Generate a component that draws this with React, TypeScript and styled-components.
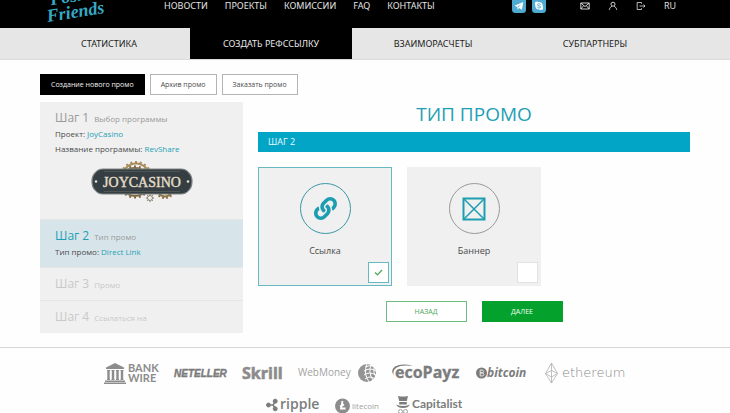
import React, { useState } from "react";
import styled, { createGlobalStyle, css } from "styled-components";
import { FaLink } from "react-icons/fa";

const color = {
  ink: "#222222",
  text: "#4a4a4a",
  muted: "#9a9a9a",
  faint: "#c9c9c9",
  panel: "#f0f0f0",
  teal: "#1f9fb5",
  bar: "#03a5c7",
  green: "#04a22c",
  logo: "#8c8c8c",
  logoLight: "#b0b0b0",
};

const GlobalStyle = createGlobalStyle`
  *, *::before, *::after { box-sizing: border-box; }
  body {
    margin: 0;
    background: #fefefe;
    color: ${color.text};
    font-family: "Open Sans", "Noto Sans", sans-serif;
  }
  button, input { font: inherit; margin: 0; }
  a { color: inherit; text-decoration: none; }
  svg { display: block; flex: none; overflow: visible; }
`;

const Page = styled.div`
  height: 100vh;
  overflow: hidden;
`;

/* ---------- header ---------- */

const Header = styled.header`
  display: flex;
  align-items: flex-start;
  height: 28px;
  padding: 0 54px 0 40px;
  background: #000;
  color: #e4e4e4;
`;

const Brand = styled.a`
  width: 124px;
`;

const MainNav = styled.nav`
  display: flex;
  gap: 17px;
  font-family: "Noto Sans", sans-serif;
  font-size: 9px;
  line-height: 12px;
`;

const Social = styled.div`
  display: flex;
  gap: 6px;
  margin-left: auto;
`;

const Tools = styled.div`
  display: flex;
  align-items: center;
  gap: 18px;
  margin-left: 34px;
  font-size: 9px;
  line-height: 12px;
`;

const IconButton = styled.button`
  padding: 0;
  border: 0;
  background: none;
  color: inherit;
  cursor: pointer;
`;

const Sections = styled.nav`
  display: grid;
  grid-template-columns: repeat(4, 1fr);
  padding: 0 54px 0 28px;
  background: #e6e6e6;
  border-bottom: 1px solid #dcdcdc;
`;

const SectionLink = styled.a<{ $active?: boolean }>`
  padding-top: 1px;
  font-family: "Noto Sans", sans-serif;
  font-size: 9px;
  line-height: 30px;
  text-align: center;
  color: ${(p) => (p.$active ? "#e8e8e8" : color.ink)};
  background: ${(p) => (p.$active ? "#000" : "transparent")};
`;

/* ---------- content ---------- */

const Content = styled.main`
  padding: 14px 40px;
`;

const PromoTabs = styled.div`
  display: flex;
  gap: 5px;
  margin-bottom: 7px;
`;

const PromoTab = styled.button<{ $active?: boolean }>`
  height: 21px;
  padding: 0 10px;
  font-size: 7px;
  border: 1px solid ${(p) => (p.$active ? "#000" : "#b4b4b4")};
  background: ${(p) => (p.$active ? "#000" : "#fff")};
  color: ${(p) => (p.$active ? "#f0f0f0" : color.text)};
  cursor: pointer;
`;

const Columns = styled.div`
  display: grid;
  grid-template-columns: 203fr 432fr;
  gap: 15px;
  align-items: start;
`;

const Steps = styled.aside`
  background: ${color.panel};
`;

const Step = styled.section<{ $state: "done" | "current" | "next" }>`
  padding: 8px 15px;
  color: ${(p) => (p.$state === "next" ? color.faint : color.text)};
  ${(p) => p.$state === "current" && css`background: #d7e5ea;`}
  ${(p) =>
    p.$state === "next" &&
    css`
      & + & {
        border-top: 1px solid #e6e6e6;
      }
    `}
`;

const StepTitle = styled.h2<{ $tone: string }>`
  display: flex;
  align-items: baseline;
  gap: 5px;
  margin: 0;
  font-size: 12px;
  font-weight: 400;
  line-height: 16px;
  color: ${(p) => p.$tone};
`;

const StepHint = styled.span<{ $tone: string }>`
  font-size: 8px;
  line-height: 8px;
  color: ${(p) => p.$tone};
`;

const StepLine = styled.p`
  margin: 0;
  font-size: 8px;
  line-height: 15px;
`;

const StepLink = styled.a`
  && {
    color: ${color.teal};
  }
`;

const CasinoLogo = styled.div`
  display: flex;
  justify-content: center;
  padding: 4px 0 8px;
`;

const Title = styled.h1`
  margin: 0 0 6px;
  font-size: 19px;
  font-weight: 400;
  line-height: 24px;
  text-align: center;
  color: ${color.teal};
`;

const StepBar = styled.div`
  padding: 0 10px;
  font-size: 9px;
  line-height: 20px;
  background: ${color.bar};
  color: #e9fbff;
`;

const Cards = styled.div`
  display: grid;
  grid-template-columns: repeat(auto-fill, 134px);
  gap: 15px;
  margin: 15px 0;
`;

const Card = styled.label<{ $selected: boolean }>`
  display: flex;
  flex-direction: column;
  align-items: center;
  padding: 15px 2px 2px;
  font-size: 9px;
  line-height: 18px;
  border: 1px solid ${(p) => (p.$selected ? "#66b8c2" : color.panel)};
  background: ${color.panel};
  cursor: pointer;
`;

const Ring = styled.span<{ $selected: boolean }>`
  display: grid;
  place-items: center;
  width: 51px;
  height: 51px;
  margin-bottom: 8px;
  border: 1px solid ${(p) => (p.$selected ? "#3a98a4" : "#999")};
  border-radius: 50%;
  color: #1c9db0;
`;

const Tick = styled.span`
  display: grid;
  place-items: center;
  align-self: flex-end;
  margin-top: 2px;

  & > * {
    grid-area: 1 / 1;
  }

  svg {
    pointer-events: none;
  }
`;

const TickInput = styled.input`
  appearance: none;
  width: 21px;
  height: 21px;
  border: 1px solid #e2e2e2;
  background: #fff;

  &:checked {
    border-color: #66b8c2;
  }
`;

const Actions = styled.div`
  display: flex;
  justify-content: center;
  gap: 15px;
`;

const ActionButton = styled.button<{ $primary?: boolean }>`
  width: 81px;
  height: 21px;
  padding: 0;
  font-size: 7px;
  border: 1px solid ${(p) => (p.$primary ? color.green : "#6fbd80")};
  background: ${(p) => (p.$primary ? color.green : "#fff")};
  color: ${(p) => (p.$primary ? "#f2fff4" : "#4fa862")};
  cursor: pointer;
`;

/* ---------- footer ---------- */

const Footer = styled.footer`
  display: flex;
  flex-direction: column;
  gap: 10px;
  padding-top: 14px;
  border-top: 1px solid #d6d6d6;
`;

const PaymentRow = styled.div`
  display: flex;
  justify-content: center;
  align-items: center;
  gap: 15px;
`;

/* ---------- drawings ---------- */

const BrandLogo = () => (
  <svg width="68" height="28" viewBox="0 0 68 28" role="img" aria-label="PosH Friends">
    <g
      transform="rotate(-9 8 24)"
      fill="#36a9c4"
      fontFamily='"Liberation Serif", serif'
      fontStyle="italic"
      fontWeight="700"
    >
      <text x="14" y="6" fontSize="18">Posh</text>
      <text x="8" y="22" fontSize="18">Friends</text>
    </g>
  </svg>
);

const TelegramIcon = () => (
  <svg width="14" height="13" viewBox="0 0 14 13" aria-hidden="true">
    <path d="M0 0h14v9.500a3.500 3.500 0 0 1-3.500 3.500h-7a3.500 3.500 0 0 1-3.500-3.500z" fill="#4fabd2" />
    <path d="M2.500 5.800 11.300 2 9.900 9.800 7.100 8 5.600 9.400 5.300 7z" fill="#fff" />
    <path d="M5.400 7 9.300 4.100 6.300 7.500z" fill="#4fabd2" />
  </svg>
);

const SkypeIcon = () => (
  <svg width="14" height="13" viewBox="0 0 14 13" aria-hidden="true">
    <path d="M0 0h14v9.500a3.500 3.500 0 0 1-3.500 3.500h-7a3.500 3.500 0 0 1-3.500-3.500z" fill="#4fabd2" />
    <circle cx="7" cy="5.800" r="3.700" fill="#fff" />
    <circle cx="4.900" cy="3.700" r="2.100" fill="#fff" />
    <circle cx="9.100" cy="7.900" r="2.100" fill="#fff" />
    <path
      d="M8.700 4.500C8.200 3.500 5.400 3.500 5.400 4.800S8.700 5.700 8.700 7 5.700 8.300 5.300 7.100"
      fill="none"
      stroke="#4fabd2"
      strokeWidth="1"
      strokeLinecap="round"
    />
  </svg>
);

const MailIcon = () => (
  <svg width="10" height="12" viewBox="0 0 10 12" fill="none" stroke="currentColor" aria-hidden="true">
    <path d="M.8 3h8.400v6H.8zM.8 3 5 6.600 9.200 3M.8 9l2.900-3.400M9.200 9 6.300 5.600" strokeWidth="0.900" />
  </svg>
);

const UserIcon = () => (
  <svg width="10" height="12" viewBox="0 0 10 12" fill="none" stroke="currentColor" aria-hidden="true">
    <circle cx="5" cy="4.200" r="2" strokeWidth="0.900" />
    <path d="M1.300 9.800C1.500 7.800 3 6.800 4 6.100M8.700 9.800C8.500 7.800 7 6.800 6 6.100" strokeWidth="0.900" />
  </svg>
);

const ExitIcon = () => (
  <svg width="10" height="12" viewBox="0 0 10 12" fill="none" stroke="currentColor" aria-hidden="true">
    <path d="M5.500 3.800V2.500H1.200v7H5.500V8.200M3.500 6H9M7.500 4.500 9 6 7.500 7.500" strokeWidth="0.800" />
  </svg>
);

const gearTeeth = (cx: number, cy: number, r: number, n: number, length: number) =>
  Array.from({ length: n }, (_, i) => {
    const a = (i * 2 * Math.PI) / n;
    const x = Math.cos(a);
    const y = Math.sin(a);
    return `M${cx + x * r} ${cy + y * r}L${cx + x * (r + length)} ${cy + y * (r + length)}`;
  }).join("");

const Gear = (p: { cx: number; cy: number; r: number; n: number; tone: string; w: number }) => (
  <g stroke={p.tone} fill="none">
    <circle cx={p.cx} cy={p.cy} r={p.r} strokeWidth={p.w} />
    <path d={gearTeeth(p.cx, p.cy, p.r, p.n, p.w + 0.6)} strokeWidth={p.w} />
  </g>
);

const JoyCasinoLogo = () => (
  <svg width="104" height="43" viewBox="0 0 104 43" role="img" aria-label="JoyCasino">
    <Gear cx={46} cy={17} r={13.500} n={20} tone="#a98d5c" w={2} />
    <Gear cx={45} cy={22} r={14} n={20} tone="#806a43" w={2} />
    <Gear cx={75} cy={29} r={7.500} n={14} tone="#8f7546" w={2} />
    <path
      d="M13 9H91Q96 9 99 13Q102 16 102 21.500T99 30Q96 34 91 34H13Q8 34 5 30Q2 27 2 21.500T5 13Q8 9 13 9z"
      fill="#353f43"
      stroke="#7c827f"
      strokeWidth="1.200"
    />
    <path d="M14 11.500H90M14 31.500H90" stroke="#59605e" strokeWidth="0.700" />
    <Gear cx={60} cy={38} r={2.500} n={8} tone="#8c8471" w={1} />
    <circle cx="6" cy="21.500" r="1.300" fill="#e5e3dd" />
    <circle cx="98" cy="21.500" r="1.300" fill="#e5e3dd" />
    <text
      x="52"
      y="27"
      textAnchor="middle"
      fontFamily='"Liberation Serif", serif'
      fontSize="14"
      fill="#e5ddc8"
      stroke="#e5ddc8"
      strokeWidth="0.400"
    >
      JOYCASINO
    </text>
  </svg>
);

const BannerIcon = () => (
  <svg width="24" height="24" viewBox="0 0 24 24" fill="none" stroke="currentColor" aria-hidden="true">
    <rect x="1.500" y="1.500" width="21" height="21" strokeWidth="2" />
    <path d="M2 2 22 22M22 2 2 22" strokeWidth="1.500" />
  </svg>
);

const CheckIcon = () => (
  <svg width="9" height="7" viewBox="0 0 9 7" fill="none" stroke="#4caa58" strokeWidth="1.300" aria-hidden="true">
    <path d="M1 3.500 3.500 5.900 8 1" />
  </svg>
);

const SANS = '"Open Sans", sans-serif';

const BankWire = () => (
  <svg width="55" height="22" viewBox="0 0 55 22" fill={color.logo} role="img" aria-label="Bank Wire">
    <path d="M11 1 20 5.500V7H2V5.500zM1 18.500H21V20H1zM0 20.600H22V22H0z" />
    <path d="M3 8h3v1H5.700v8H6v1H3v-1h.3V9H3zM7.500 8h3v1h-.3v8h.3v1h-3v-1h.3V9h-.3zM12 8h3v1h-.3v8h.3v1h-3v-1h.3V9H12zM16.500 8h3v1h-.3v8h.3v1h-3v-1h.3V9h-.3z" />
    <g fontFamily='"Lato", sans-serif' fontWeight="700" fontSize="11">
      <text x="24" y="10">BANK</text>
      <text x="24" y="20">WIRE</text>
    </g>
  </svg>
);

const Neteller = () => (
  <svg width="53" height="22" viewBox="0 0 53 22" role="img" aria-label="Neteller">
    <text x="0" y="15" fontFamily='"Liberation Sans", sans-serif' fontWeight="700" fontStyle="italic" fontSize="10" fill="#7c7c7c" stroke="#7c7c7c" strokeWidth="0.400">
      NETELLER
    </text>
  </svg>
);

const Skrill = () => (
  <svg width="41" height="22" viewBox="0 0 41 22" role="img" aria-label="Skrill">
    <text x="0" y="17" fontFamily={SANS} fontWeight="700" fontSize="16" fill={color.logo} stroke={color.logo} strokeWidth="0.600">
      Skrill
    </text>
  </svg>
);

const WebMoney = () => (
  <svg width="78" height="22" viewBox="0 0 78 22" role="img" aria-label="WebMoney">
    <text x="0" y="14" fontFamily={SANS} fontSize="10" fill="#a3a3a3">WebMoney</text>
    <circle cx="69" cy="11" r="9" fill="#949494" />
    <g fill="none" stroke="#fefefe" strokeWidth="1">
      <path d="M69 2Q65 11 71 20M73 3Q70 11 75 18M76 5Q75 11 78 15" />
      <path d="M67 5Q73 2 77 5M66 9Q72 5 78 9M66 13Q71 9 78 13M67 17Q72 13 77 17" />
    </g>
  </svg>
);

const EcoPayz = () => (
  <svg width="70" height="22" viewBox="0 0 70 22" role="img" aria-label="ecoPayz">
    <path d="M3 14Q-1 8 4 4.500Q11 1 22 4Q10 2.500 5 6Q1 9 3 14z" fill="#7c7c7c" />
    <text x="4" y="16" fontFamily={SANS} fontWeight="700" fontSize="16" fill="#7c7c7c" stroke="#7c7c7c" strokeWidth="0.300">
      ecoPayz
    </text>
  </svg>
);

const Bitcoin = () => (
  <svg width="54" height="22" viewBox="0 0 54 22" role="img" aria-label="bitcoin">
    <circle cx="5.500" cy="11" r="5.500" fill="#7c7c7c" />
    <path d="M4.200 8H6a1.400 1.400 0 0 1 0 2.900H4.200zM4.200 10.900H6.300a1.500 1.500 0 0 1 0 3H4.200z" fill="none" stroke="#ededed" strokeWidth="0.900" />
    <text x="11" y="15" fontFamily={SANS} fontWeight="700" fontStyle="italic" fontSize="12" fill="#7c7c7c">
      bitcoin
    </text>
  </svg>
);

const Ethereum = () => (
  <svg width="82" height="22" viewBox="0 0 82 22" role="img" aria-label="ethereum">
    <path d="M6.500 1 12.500 11.500 6.500 21 .5 11.500zM6.500 1V21M.5 11.500 6.500 8.500 12.500 11.500 6.500 15z" fill="none" stroke={color.logoLight} strokeWidth="0.800" />
    <text x="17" y="15" fontFamily='"DejaVu Sans Light", "DejaVu Sans", sans-serif' fontWeight="200" fontSize="13" fill="#888">ethereum</text>
  </svg>
);

const Ripple = () => (
  <svg width="54" height="22" viewBox="0 0 54 22" role="img" aria-label="ripple">
    <g fill="#7c7c7c" stroke="#7c7c7c">
      <path d="M2.500 11H7L9.500 7.500M7 11 9.500 14.500" fill="none" strokeWidth="1.500" />
      <circle cx="2.500" cy="11" r="2" />
      <circle cx="9.200" cy="7.200" r="2" />
      <circle cx="9.200" cy="14.800" r="2" />
    </g>
    <text x="14" y="15" fontFamily={SANS} fontWeight="600" fontSize="14" fill="#7c7c7c">ripple</text>
  </svg>
);

const Litecoin = () => (
  <svg width="46" height="22" viewBox="0 0 46 22" role="img" aria-label="litecoin">
    <circle cx="7.500" cy="12" r="7.500" fill={color.logo} />
    <path d="M7.500 7 6 14.500h4.500M5 12.600 9 10.400" fill="none" stroke="#fff" strokeWidth="1.800" />
    <text x="17" y="15" fontFamily={SANS} fontSize="8" fill="#a0a0a0">litecoin</text>
  </svg>
);

const Capitalist = () => (
  <svg width="68" height="22" viewBox="0 0 68 22" role="img" aria-label="Capitalist">
    <g fill="#7c7c7c">
      <path d="M2 2Q7 3 12 2L10.800 7H3.200zM3.200 8H10.800V10.500H3.200zM0 10.500Q7 13.500 14 10.500Q12 14 7 14T0 10.500z" />
      <circle cx="4.500" cy="17.500" r="2" fill="none" stroke="#a0a0a0" />
      <circle cx="9.500" cy="17.500" r="2" fill="none" stroke="#a0a0a0" />
    </g>
    <text x="16" y="14" fontFamily='"Lato", sans-serif' fontWeight="700" fontSize="12" fill="#7c7c7c">Capitalist</text>
  </svg>
);

/* ---------- page ---------- */

const NAV = ["НОВОСТИ", "ПРОЕКТЫ", "КОМИССИИ", "FAQ", "КОНТАКТЫ"];
const SECTIONS = ["СТАТИСТИКА", "СОЗДАТЬ РЕФССЫЛКУ", "ВЗАИМОРАСЧЕТЫ", "СУБПАРТНЕРЫ"];
const PROMO_TABS = ["Создание нового промо", "Архив промо", "Заказать промо"];
const TYPES = [
  { id: "link", label: "Ссылка", icon: <FaLink size={23} /> },
  { id: "banner", label: "Баннер", icon: <BannerIcon /> },
];

export default function App() {
  const [type, setType] = useState("link");
  const [tab, setTab] = useState(0);

  return (
    <Page>
      <GlobalStyle />
      <Header>
        <Brand href="#"><BrandLogo /></Brand>
        <MainNav>
          {NAV.map((item) => <a key={item} href="#">{item}</a>)}
        </MainNav>
        <Social>
          <a href="#" aria-label="Telegram"><TelegramIcon /></a>
          <a href="#" aria-label="Skype"><SkypeIcon /></a>
        </Social>
        <Tools>
          <IconButton aria-label="Сообщения"><MailIcon /></IconButton>
          <IconButton aria-label="Профиль"><UserIcon /></IconButton>
          <IconButton aria-label="Выход"><ExitIcon /></IconButton>
          <IconButton>RU</IconButton>
        </Tools>
      </Header>
      <Sections>
        {SECTIONS.map((item, i) => (
          <SectionLink key={item} href="#" $active={i === 1}>{item}</SectionLink>
        ))}
      </Sections>

      <Content>
        <PromoTabs>
          {PROMO_TABS.map((item, i) => (
            <PromoTab key={item} $active={i === tab} onClick={() => setTab(i)}>{item}</PromoTab>
          ))}
        </PromoTabs>
        <Columns>
          <Steps>
            <Step $state="done">
              <StepTitle $tone={color.muted}>
                Шаг 1 <StepHint $tone={color.muted}>Выбор программы</StepHint>
              </StepTitle>
              <StepLine>Проект: <StepLink href="#">JoyCasino</StepLink></StepLine>
              <StepLine>Название программы: <StepLink href="#">RevShare</StepLink></StepLine>
              <CasinoLogo><JoyCasinoLogo /></CasinoLogo>
            </Step>
            <Step $state="current">
              <StepTitle $tone={color.teal}>
                Шаг 2 <StepHint $tone={color.muted}>Тип промо</StepHint>
              </StepTitle>
              <StepLine>Тип промо: <StepLink href="#">Direct Link</StepLink></StepLine>
            </Step>
            <Step $state="next">
              <StepTitle $tone={color.faint}>
                Шаг 3 <StepHint $tone={color.faint}>Промо</StepHint>
              </StepTitle>
            </Step>
            <Step $state="next">
              <StepTitle $tone={color.faint}>
                Шаг 4 <StepHint $tone={color.faint}>Ссылаться на</StepHint>
              </StepTitle>
            </Step>
          </Steps>

          <section>
            <Title>ТИП ПРОМО</Title>
            <StepBar>ШАГ 2</StepBar>
            <Cards>
              {TYPES.map((t) => (
                <Card key={t.id} $selected={type === t.id}>
                  <Ring $selected={type === t.id}>{t.icon}</Ring>
                  {t.label}
                  <Tick>
                    <TickInput
                      type="radio"
                      name="promo-type"
                      checked={type === t.id}
                      onChange={() => setType(t.id)}
                    />
                    {type === t.id && <CheckIcon />}
                  </Tick>
                </Card>
              ))}
            </Cards>
            <Actions>
              <ActionButton>НАЗАД</ActionButton>
              <ActionButton $primary>ДАЛЕЕ</ActionButton>
            </Actions>
          </section>
        </Columns>
      </Content>

      <Footer>
        <PaymentRow>
          <BankWire />
          <Neteller />
          <Skrill />
          <WebMoney />
          <EcoPayz />
          <Bitcoin />
          <Ethereum />
        </PaymentRow>
        <PaymentRow>
          <Ripple />
          <Litecoin />
          <Capitalist />
        </PaymentRow>
      </Footer>
    </Page>
  );
}
